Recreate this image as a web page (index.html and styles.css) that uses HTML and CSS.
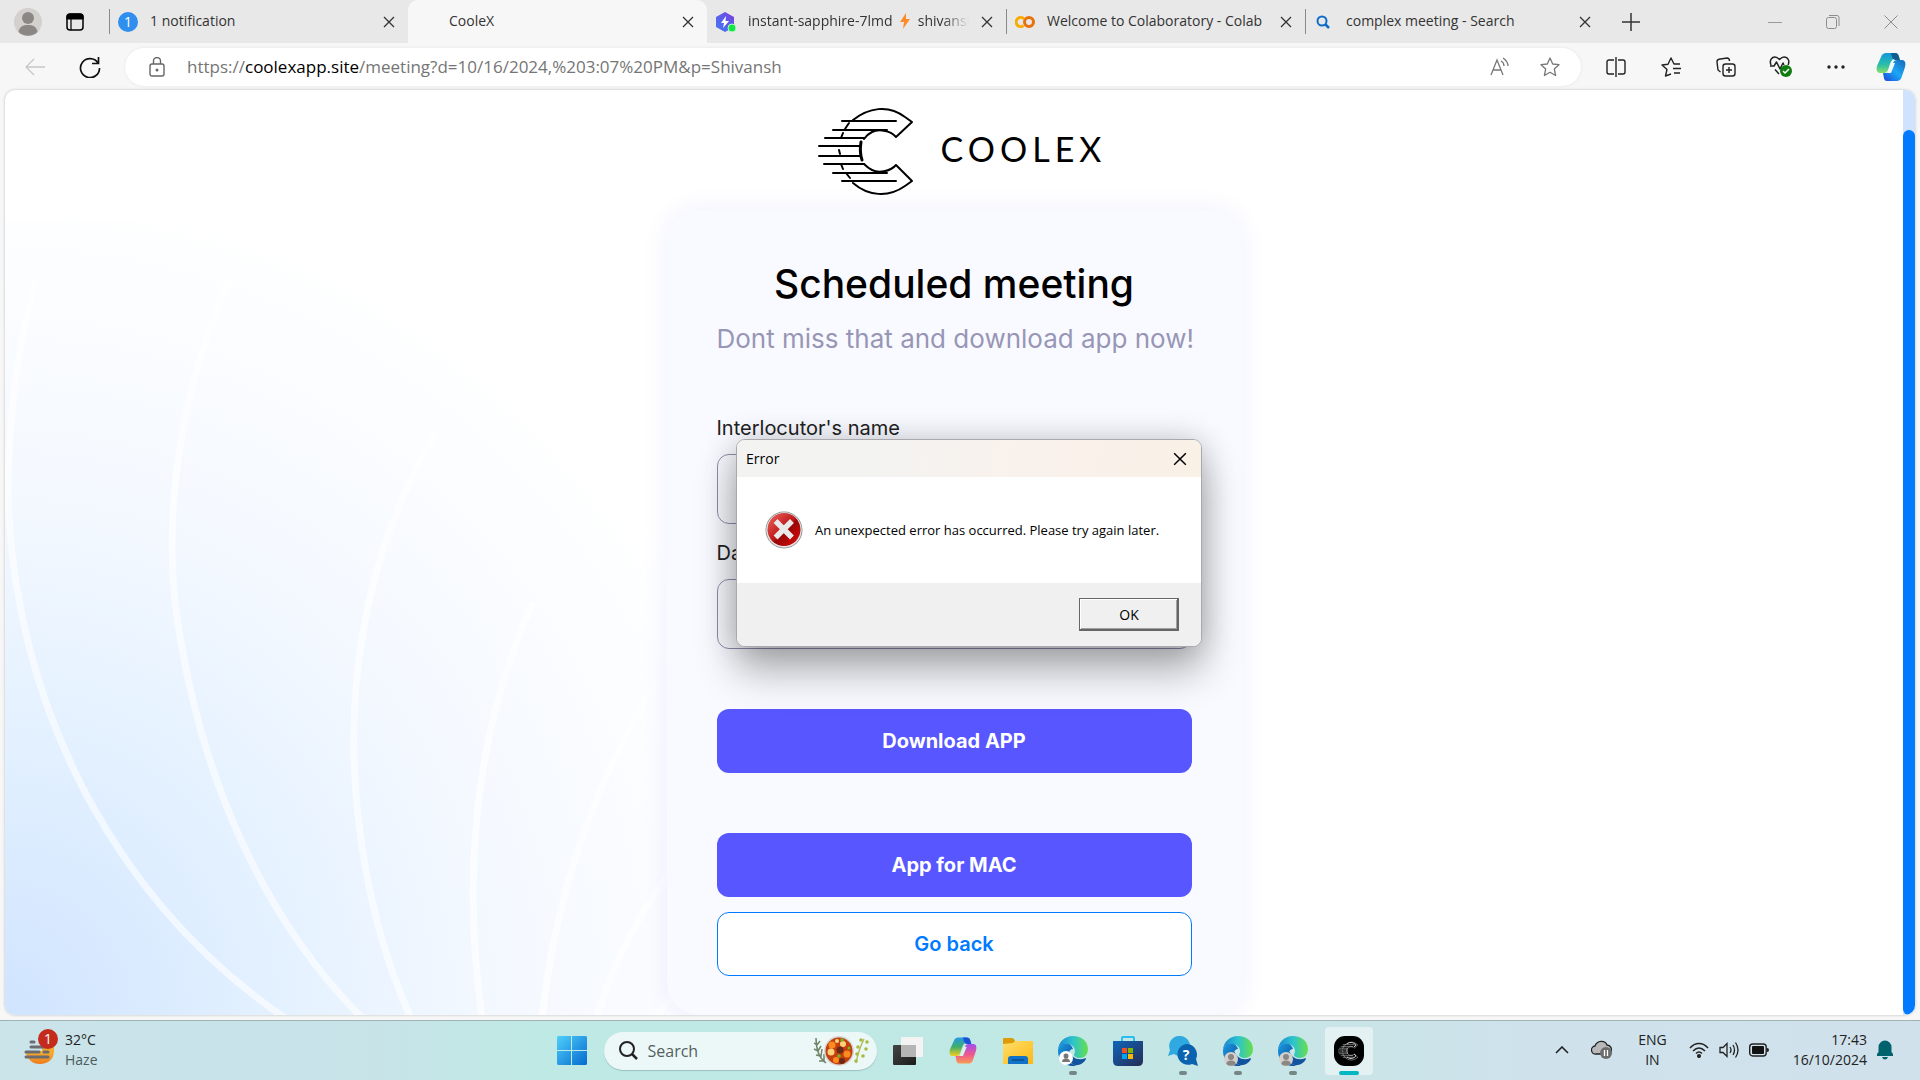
FILE: index.html
```html
<!DOCTYPE html>
<html lang="en">
<head>
<meta charset="utf-8">
<title>CooleX</title>
<link rel="stylesheet" href="styles.css">
</head>
<body>
<svg class="defs" aria-hidden="true">
  <defs>
    <linearGradient id="win" x1="0" y1="0" x2="1" y2="1"><stop offset="0" stop-color="#4fd0fb"/><stop offset="1" stop-color="#0569ce"/></linearGradient>
    <linearGradient id="edgeTop" x1="0" y1="0" x2="1" y2="0"><stop offset="0" stop-color="#1a86d2"/><stop offset=".5" stop-color="#2cc3cf"/><stop offset="1" stop-color="#67e04b"/></linearGradient>
    <linearGradient id="edgeLow" x1="0" y1="0" x2="1" y2="1"><stop offset="0" stop-color="#1b9de2"/><stop offset="1" stop-color="#0b3f93"/></linearGradient>
    <linearGradient id="folder" x1="0" y1="0" x2="1" y2="1"><stop offset="0" stop-color="#ffdf6b"/><stop offset="1" stop-color="#fdb813"/></linearGradient>
    <linearGradient id="store" x1="0" y1="0" x2="1" y2="1"><stop offset="0" stop-color="#0d66ba"/><stop offset="1" stop-color="#272c55"/></linearGradient>
    <linearGradient id="cpA" x1="0" y1="0" x2="0" y2="1"><stop offset="0" stop-color="#1497e0"/><stop offset=".6" stop-color="#2cbfa5"/><stop offset="1" stop-color="#8be06a"/></linearGradient>
    <linearGradient id="cpB" x1="1" y1="0" x2="0" y2="1"><stop offset="0" stop-color="#1668b8"/><stop offset=".5" stop-color="#1ca7f5"/><stop offset="1" stop-color="#1846d8"/></linearGradient>
    <linearGradient id="cpC" x1="0" y1="0" x2="0" y2="1"><stop offset="0" stop-color="#2499e8"/><stop offset=".5" stop-color="#3cae6c"/><stop offset="1" stop-color="#f5cf1d"/></linearGradient>
    <linearGradient id="cpD" x1="0" y1="0" x2="0" y2="1"><stop offset="0" stop-color="#a04df0"/><stop offset=".55" stop-color="#ee5a8d"/><stop offset="1" stop-color="#fb9b52"/></linearGradient>
    <linearGradient id="hex" x1="1" y1="0" x2="0" y2="1"><stop offset="0" stop-color="#7a3fe0"/><stop offset="1" stop-color="#3f7cf5"/></linearGradient>
    <linearGradient id="err" x1="0" y1="0" x2="1" y2="1"><stop offset="0" stop-color="#ee6a62"/><stop offset=".5" stop-color="#bf1618"/><stop offset=".55" stop-color="#990506"/><stop offset="1" stop-color="#e00d0d"/></linearGradient>
    <linearGradient id="sun" x1="0" y1="0" x2="0" y2="1"><stop offset="0" stop-color="#f7b431"/><stop offset="1" stop-color="#ef7b1c"/></linearGradient>
    <linearGradient id="tv" x1="0" y1="0" x2="1" y2="1"><stop offset="0" stop-color="#444"/><stop offset="1" stop-color="#1c1c1c"/></linearGradient>
  </defs>
  <symbol id="x" viewBox="0 0 12 12"><path d="M1 1l10 10M11 1L1 11" fill="none" stroke="currentColor" stroke-width="1.3"/></symbol>
  <symbol id="person" viewBox="0 0 28 28"><circle cx="14" cy="14" r="14" fill="#d3d1ce"/><circle cx="14" cy="10" r="6" fill="#8b8784"/><path d="M4.500 24c1-6 5-7 9.500-7s8.500 1 9.500 7a14 14 0 0 1-19 0z" fill="#8b8784"/></symbol>
  <symbol id="edge" viewBox="0 0 30 30">
    <path d="M15 0C6 0 .5 6.500 0 14c1-5 6-7 10-6 5 1 7 4 7 7 0 2-1 3-1 4s2 3 6 3c5 0 8-4 8-9C30 5 23 0 15 0z" fill="url(#edgeTop)"/>
    <path d="M0 14C-.5 23 6 30 15 30c1 0 2 0 3-.3C11 28 9 22 10 18c.6-3 3-5 5-5-1-4-4-6-8-5.500C3 8 .5 11 0 14z" fill="url(#edgeLow)"/>
    <path d="M11 15c-2 4-1 10 5 14 5 1 10-2 12-6 .3-1-.5-1-1-.7-4 1.700-9 1-12-1.600-2-1.700-3-3.700-4-5.700z" fill="#12539f"/>
  </symbol>
  <symbol id="cmark" viewBox="0 0 95 88">
    <g fill="none" stroke="currentColor" stroke-linecap="round" stroke-linejoin="round">
      <path stroke-width="2" d="M35 13C50 1 70-3 87 10l7 5-16 15C72 23 60 22 54 25c-4 2-6 4-8 7"/>
      <path stroke-width="2" d="M35 76C50 89 70 91 87 79l7-5-16-16C72 65 60 66 54 63c-4-2-6-4-8-6"/>
      <path stroke-width="3" d="M43 35c-1 6-1 12 1 18"/>
      <path stroke-width="2" d="M31 16l-4 6M25 26l-2 5M21 43l1 4M23 57l2 5M28 66l4 5"/>
      <path stroke-width="2" d="M24 14h54M15 23h54M7 31h39M1 39h41M1 49h41M6 57h40M15 66h54M24 74h54"/>
    </g>
  </symbol>
</svg>

<header class="browser">
  <div class="tabstrip">
    <button class="plain profile" aria-label="Profile"><svg width="28" height="28"><use href="#person"/></svg></button>
    <button class="plain tabmenu" aria-label="Tab actions"><svg width="18" height="18" viewBox="0 0 18 18"><rect x="1" y="1" width="16" height="16" rx="3" fill="none" stroke="#000" stroke-width="1.500"/><path d="M1 6V4a3 3 0 0 1 3-3h10a3 3 0 0 1 3 3v2zM5 6v11" stroke="#000" stroke-width="1.200"/></svg></button>
    <nav class="tabs">
      <div class="tab line"><span class="badge">1</span><span class="label">1 notification</span><button class="plain close" aria-label="Close tab"><svg width="12" height="12"><use href="#x"/></svg></button></div>
      <div class="tab active"><span class="blank"></span><span class="label">CooleX</span><button class="plain close" aria-label="Close tab"><svg width="12" height="12"><use href="#x"/></svg></button></div>
      <div class="tab after"><svg width="20" height="20" viewBox="0 0 20 20"><path d="M9 0l9 5v10l-9 5-9-5V5z" fill="url(#hex)"/><path d="M10 4l-5 7h3l-1 5 6-7H9.500z" fill="#fff"/><circle cx="16" cy="16" r="4" fill="#12e646" stroke="#b8f5c5" stroke-width="1"/></svg><span class="label fade">instant-sapphire-7lmd <svg class="bolt" width="12" height="16" viewBox="0 0 12 16"><path d="M7 0L1 9h4l-1 7 7-10H7z" fill="#ff8a2b"/></svg> shivansh</span><button class="plain close" aria-label="Close tab"><svg width="12" height="12"><use href="#x"/></svg></button></div>
      <div class="tab line"><svg width="20" height="20" viewBox="0 0 20 20"><g fill="none" stroke-width="3"><circle cx="14" cy="10" r="4.500" stroke="#e8710a"/><path d="M8.500 13.500A4.500 4.500 0 1 1 9 7" stroke="#f9ab00"/></g></svg><span class="label">Welcome to Colaboratory - Colab</span><button class="plain close" aria-label="Close tab"><svg width="12" height="12"><use href="#x"/></svg></button></div>
      <div class="tab line"><svg width="20" height="20" viewBox="0 0 20 20"><circle cx="8" cy="9" r="4.500" fill="none" stroke="#0f6cc9" stroke-width="2"/><path d="M11 12l4 4" stroke="#0f6cc9" stroke-width="2.500"/></svg><span class="label">complex meeting - Search</span><button class="plain close" aria-label="Close tab"><svg width="12" height="12"><use href="#x"/></svg></button></div>
      <button class="plain newtab" aria-label="New tab"><svg width="18" height="18" viewBox="0 0 18 18"><path d="M9 0v18M0 9h18" stroke="#333" stroke-width="1.500"/></svg></button>
    </nav>
    <div class="winbtns">
      <button class="plain" aria-label="Minimize"><svg width="14" height="14" viewBox="0 0 14 14"><path d="M0 7.500h14" stroke="#999"/></svg></button>
      <button class="plain" aria-label="Restore"><svg width="14" height="14" viewBox="0 0 14 14" fill="none" stroke="#8d8d8d"><rect x=".5" y="2.500" width="10" height="11" rx="2"/><path d="M3 .5h8a2 2 0 0 1 2 2V11"/></svg></button>
      <button class="plain" aria-label="Close"><svg width="14" height="14" viewBox="0 0 14 14"><path d="M.5.5l13 13M13.500.5l-13 13" stroke="#8d8d8d"/></svg></button>
    </div>
  </div>
  <div class="toolbar">
    <button class="plain" aria-label="Back"><svg width="20" height="20" viewBox="0 0 20 20" fill="none" stroke="#c8c8c8" stroke-width="1.300"><path d="M20 10H1M9 2l-8 8 8 8"/></svg></button>
    <button class="plain" aria-label="Refresh"><svg width="22" height="22" viewBox="0 0 22 22" fill="none" stroke="#111" stroke-width="1.700"><path d="M19 7A9.500 9.500 0 1 0 20.500 12M19.500 1v6.500H13"/></svg></button>
    <div class="address">
      <svg width="16" height="20" viewBox="0 0 16 20" fill="none" stroke="#666" stroke-width="1.400"><rect x="1" y="7" width="14" height="12" rx="2"/><path d="M4.500 7V4a3.500 3.500 0 0 1 7 0v3"/><circle cx="8" cy="13" r=".8" fill="#666"/></svg>
      <span class="url">https://<b>coolexapp.site</b>/meeting?d=10/16/2024,%203:07%20PM&amp;p=Shivansh</span>
      <button class="plain" aria-label="Read aloud"><svg width="20" height="20" viewBox="0 0 20 20" fill="none" stroke="#777" stroke-width="1.300"><path d="M1 18L7 3l6 15M3 13h8M11 4c2 1 3 3 3 5M13 1c3 2 5 5 5 8"/></svg></button>
      <button class="plain" aria-label="Favorite"><svg width="20" height="20" viewBox="0 0 20 20" fill="none" stroke="#777" stroke-width="1.300" stroke-linejoin="round"><path d="M10 1l2.700 6 6.300.7-4.700 4.300 1.300 6.500L10 15.300 4.400 18.500 5.700 12 1 7.700 7.300 7z"/></svg></button>
    </div>
    <div class="tools">
      <button class="plain" aria-label="Split screen"><svg width="20" height="20" viewBox="0 0 20 20" fill="none" stroke="#222" stroke-width="1.400"><path d="M8 3H3a2 2 0 0 0-2 2v10a2 2 0 0 0 2 2h5M12 3h5a2 2 0 0 1 2 2v10a2 2 0 0 1-2 2h-5M10 0v20"/></svg></button>
      <button class="plain" aria-label="Favorites"><svg width="20" height="20" viewBox="0 0 20 20" fill="none" stroke="#222" stroke-width="1.400" stroke-linejoin="round"><path d="M10 17l-5.500 2L6 12.500 1 8l6-.7L10 1l3 6h6M12 11.500h8M13 16h6"/></svg></button>
      <button class="plain" aria-label="Collections"><svg width="20" height="20" viewBox="0 0 20 20" fill="none" stroke="#222" stroke-width="1.400"><rect x="7" y="7" width="12" height="12" rx="2.500"/><path d="M13 10v6M10 13h6M4.500 15L2 13 1 5c0-2 1-2.500 2-2.700L11 1c1.500 0 2.500 1 2.500 3"/></svg></button>
      <button class="plain" aria-label="Browser essentials"><svg width="24" height="22" viewBox="0 0 24 22" fill="none" stroke="#222" stroke-width="1.500" stroke-linejoin="round"><path d="M10 18L6 13.500M2 9C0 4 3 1 6 1c2 0 3 1 4.500 2.500C12 2 13 1 15 1c4 0 6 4 4 8M1 10h4l2.500-4 3.500 7 3-6 1 2"/><circle cx="17" cy="15" r="6" fill="#107c10" stroke="none"/><path d="M14 15l2 2 4-4" stroke="#fff"/></svg></button>
      <button class="plain" aria-label="More"><svg width="20" height="20" viewBox="0 0 20 20" fill="#222"><circle cx="3" cy="10" r="1.700"/><circle cx="10" cy="10" r="1.700"/><circle cx="17" cy="10" r="1.700"/></svg></button>
      <button class="plain" aria-label="Copilot"><svg width="30" height="28" viewBox="0 0 30 28"><path d="M10 0h9c3 0 4 2 4 5l-4 1c-3 0-4 2-5 5l-2 6c-1 2-2 3-4 3H4c-3 0-4-3-3-7L5 4c1-3 3-4 5-4z" fill="url(#cpA)"/><path d="M15 0h4c3 0 4 3 5 7h-4c-3 0-4-2-5-7z" fill="#135d92"/><path d="M20 28h-9c-3 0-3-3-4-8h3c2 0 4-2 5-5l2-5c1-2 2-3 4-3h5c3 0 4 3 3 7l-3 9c-1 4-3 5-6 5z" fill="url(#cpB)"/><path d="M15 10h4l-4 10h-4c1-1 1-2 2-4z" fill="#f7f7f7"/></svg></button>
    </div>
  </div>
</header>

<main class="viewport">
  <div class="page">
    <svg class="waves" width="720" height="795" viewBox="5 220 720 795" fill="none" stroke="#fff" stroke-opacity=".6" stroke-width="7" aria-hidden="true">
      <path d="M36 280C18 340 5 440 9 518C22 720 120 905 285 1018"/>
      <path d="M230 279C180 390 165 510 175 602C195 760 255 910 362 1018"/>
      <path d="M436 433C360 560 345 700 358 815C365 880 380 950 411 1018"/>
      <path d="M533 602C480 720 460 860 482 1018"/>
      <path d="M655 685C590 790 555 900 542 1018"/>
      <path d="M680 860C640 910 612 965 597 1018"/>
      <path d="M690 970L656 1018"/>
    </svg>
    <div class="logo"><svg width="95" height="88"><use href="#cmark"/></svg><span>COOLEX</span></div>
    <form class="card">
      <h1>Scheduled meeting</h1>
      <p>Dont miss that and download app now!</p>
      <div class="fields">
        <label for="who">Interlocutor's name</label>
        <input id="who" type="text">
        <label for="date">Date</label>
        <input id="date" type="text">
      </div>
      <button type="button" class="btn spaced">Download APP</button>
      <button type="button" class="btn">App for MAC</button>
      <button type="button" class="btn outline">Go back</button>
    </form>
  </div>
  <div class="scroll"><div class="thumb"></div></div>
</main>

<footer class="taskbar">
  <button class="plain weather">
    <svg width="34" height="36" viewBox="0 0 34 36"><path d="M2 22h28c0 8-6 13-14 13S4 30 2 25z" fill="url(#sun)"/><path d="M18 14h12v10H18z" fill="#f4aa2c"/><g stroke="#6b6b70" stroke-width="3" stroke-linecap="round"><path d="M7 13h3M7 18h16M2 23h13M20 23h4M2 28h22"/></g><circle cx="24" cy="10" r="10" fill="#c42b1c"/><text x="24" y="15" text-anchor="middle" font-family="Open Sans, sans-serif" font-size="14" fill="#fff">1</text></svg>
    <span>32°C<br><span class="dim">Haze</span></span>
  </button>
  <div class="apps">
    <button class="plain app" aria-label="Start"><svg width="30" height="30" viewBox="0 0 30 30"><path d="M1 0h13v14H0V1zM15 0h14l1 1v13H15zM0 15h14v14H1l-1-1zM15 15h15v13l-1 1H15z" fill="url(#win)"/></svg></button>
    <label class="search"><svg width="20" height="20" viewBox="0 0 20 20" fill="none" stroke="#222" stroke-width="2"><circle cx="9" cy="8" r="7"/><path d="M14 13l5 5" stroke-width="2.500"/></svg><input type="search" placeholder="Search" aria-label="Search">
      <svg width="56" height="32" viewBox="0 0 56 32"><g fill="none" stroke="#6f8468" stroke-width="1.500"><path d="M3 3c0 10 3 20 10 25M1 8l3 2 3-4M1 14l4 2 3-5M3 20l5 1 1-7M6 26l5 0 0-7"/></g><g fill="#a9b944"><path d="M43 28c2-10 5-18 8-24" fill="none" stroke="#a9b944" stroke-width="1.300"/><circle cx="48" cy="5" r="1.800"/><circle cx="54" cy="7" r="1.800"/><circle cx="45" cy="12" r="1.800"/><circle cx="53" cy="14" r="1.800"/><circle cx="44" cy="19" r="1.800"/><circle cx="50" cy="21" r="1.800"/><circle cx="43" cy="26" r="1.800"/></g><circle cx="26" cy="16" r="15" fill="#d8d6d4"/><circle cx="26" cy="16" r="13.500" fill="#c23f10"/><g fill="#ff8a1f"><circle cx="19" cy="10" r="3.500"/><circle cx="34" cy="19" r="3.500"/><circle cx="23" cy="25" r="3"/></g><g fill="#ffd27a"><circle cx="30" cy="9" r="3"/><circle cx="18" cy="17" r="3.500"/><circle cx="24" cy="6" r="2"/></g><g fill="#6a2a17"><circle cx="27" cy="15" r="3.500"/><circle cx="29" cy="26" r="3"/></g><g fill="#79b51c"><circle cx="29" cy="5" r="1.800"/><circle cx="26" cy="21" r="1.800"/><circle cx="36" cy="13" r="1.500"/></g></svg>
    </label>
    <button class="plain app" aria-label="Task view"><svg width="30" height="28" viewBox="0 0 30 28"><rect y="8" width="23" height="20" rx="1" fill="url(#tv)"/><rect x="8" width="22" height="20" rx="1" fill="#f3f3f3"/><path d="M8 8h15v12H8z" fill="#b5b5b5"/></svg></button>
    <button class="plain app" aria-label="Copilot"><svg width="28" height="27" viewBox="0 0 30 28"><path d="M10 0h9c3 0 4 2 4 5l-4 1c-3 0-4 2-5 5l-2 6c-1 2-2 3-4 3H4c-3 0-4-3-3-7L5 4c1-3 3-4 5-4z" fill="url(#cpC)"/><path d="M15 0h4c3 0 4 3 5 7h-4c-3 0-4-2-5-7z" fill="#1b50d8"/><path d="M20 28h-9c-3 0-3-3-4-8h3c2 0 4-2 5-5l2-5c1-2 2-3 4-3h5c3 0 4 3 3 7l-3 9c-1 4-3 5-6 5z" fill="url(#cpD)"/><path d="M15 10h4l-4 10h-4c1-1 1-2 2-4z" fill="#d9f2ef"/></svg></button>
    <button class="plain app" aria-label="File Explorer"><svg width="30" height="28" viewBox="0 0 30 28"><path d="M0 2q0-1 1-1h8q2 0 3 3h17v6H0z" fill="#dc9b07"/><path d="M0 7l10-1 2-2h17q1 0 1 1v22H0z" fill="url(#folder)"/><path d="M5 27v-5q0-3 3-3h14q3 0 3 3v5z" fill="#1272c8"/><path d="M9 23h12" stroke="#0a4f90" stroke-width="1.500"/></svg></button>
    <button class="plain app run" aria-label="Edge"><svg width="30" height="30" viewBox="0 0 30 30"><use href="#edge"/><circle cx="8" cy="22" r="7" fill="#fff"/><circle cx="8" cy="20" r="2.500" fill="#777"/><path d="M4 26c0-5 8-5 8 0z" fill="#777"/></svg></button>
    <button class="plain app" aria-label="Store"><svg width="30" height="30" viewBox="0 0 30 30"><path d="M9 6V2q0-1 1-1h10q1 0 1 1v4" fill="none" stroke="#2bbcf0" stroke-width="2"/><path d="M0 5h30v20q0 5-5 5H5q-5 0-5-5z" fill="url(#store)"/><path d="M9 12h5v5H9z" fill="#f25022"/><path d="M15 12h5v5h-5z" fill="#7fba00"/><path d="M9 18h5v5H9z" fill="#00a4ef"/><path d="M15 18h5v5h-5z" fill="#ffb900"/></svg></button>
    <button class="plain app run" aria-label="Get Help"><svg width="30" height="30" viewBox="0 0 30 30"><path d="M11 0a10 10 0 1 1-5 18L0 20l2-6A10 10 0 0 1 11 0z" fill="#2fa9e0"/><path d="M18 8a10.500 10.500 0 0 1 10 15l2 7-6-2A10.500 10.500 0 1 1 18 8z" fill="#0b63b0"/><text x="18" y="24" text-anchor="middle" font-family="Open Sans, sans-serif" font-weight="700" font-size="14" fill="#fff">?</text></svg></button>
    <button class="plain app run" aria-label="Edge"><svg width="30" height="30" viewBox="0 0 30 30"><use href="#edge"/><use href="#person" x="1" y="16" width="14" height="14"/></svg></button>
    <button class="plain app run" aria-label="Edge"><svg width="30" height="30" viewBox="0 0 30 30"><use href="#edge"/><use href="#person" x="1" y="16" width="14" height="14"/></svg></button>
    <button class="plain app run current" aria-label="CooleX"><svg width="30" height="30" viewBox="0 0 30 30" color="#fff"><rect width="30" height="30" rx="11" fill="#000"/><use href="#cmark" x="4" y="5" width="20" height="20"/><path d="M13 8c4-3 7-1 9 1l-2 2M13 21c4 3 7 1 9-1l-2-2" fill="none" stroke="#ccc"/></svg></button>
  </div>
  <div class="tray">
    <button class="plain" aria-label="Hidden icons"><svg width="14" height="8" viewBox="0 0 14 8"><path d="M1 7l6-6 6 6" fill="none" stroke="#222" stroke-width="1.600"/></svg></button>
    <svg class="cloud" width="22" height="20" viewBox="0 0 22 20"><path d="M5 14a4 4 0 0 1-1-8C6 0 14 0 16 5c4 0 5 4 4 7l-2 2z" fill="#b9b9b9" stroke="#222" stroke-width="1.300"/><circle cx="15" cy="13" r="6" fill="#6d6d6d"/><path d="M13.500 10v6M16.500 10v6" stroke="#fff" stroke-width="1.300"/></svg>
    <button class="plain lang">ENG<br>IN</button>
    <button class="plain status" aria-label="Network, volume, battery">
      <svg width="20" height="16" viewBox="0 0 20 16" fill="none" stroke="#222" stroke-width="1.500"><path d="M1 6c5-6 13-6 18 0M4 9c4-4 8-4 12 0M7 11.500c2-2 4-2 6 0"/><circle cx="10" cy="14" r="1.300" fill="#222"/></svg>
      <svg width="20" height="18" viewBox="0 0 20 18" fill="none" stroke="#222" stroke-width="1.300"><path d="M1 6.500h3l4-4v13l-4-4H1zM11 6q2 3 0 6M14 4q3 5 0 10M16.500 1.500q5 7.500 0 15"/></svg>
      <svg width="20" height="14" viewBox="0 0 20 14"><rect x=".7" y="1" width="16.500" height="12" rx="3" fill="none" stroke="#222" stroke-width="1.400"/><rect x="3" y="3" width="12" height="8" rx="1" fill="#111"/><path d="M18 5q2 0 2 2t-2 2z" fill="#222"/></svg>
    </button>
    <button class="plain clock">17:43<br>16/10/2024</button>
    <svg width="18" height="20" viewBox="0 0 18 20"><path d="M1 16v-2l1.500-2V7a6.500 6.500 0 0 1 13 0v5L17 14v2zM6 17h6q-1 2.500-3 2.500T6 17z" fill="#00626d"/></svg>
  </div>
</footer>

<section class="dialog" role="alertdialog" aria-labelledby="dt" aria-describedby="dm">
  <div class="dtitle"><span id="dt">Error</span><button class="plain" aria-label="Close"><svg width="14" height="14"><use href="#x"/></svg></button></div>
  <div class="dbody">
    <svg width="38" height="38" viewBox="0 0 38 38"><circle cx="19" cy="19" r="18.500" fill="#8c8c8c"/><circle cx="19" cy="19" r="17.700" fill="#e4e4e4"/><circle cx="19" cy="18.500" r="16.500" fill="url(#err)"/><path d="M12.500 12L25 24.500M25 12L12.500 24.500" stroke="#e9e9e9" stroke-width="5.500" stroke-linecap="square"/></svg>
    <span id="dm">An unexpected error has occurred. Please try again later.</span>
  </div>
  <div class="dfoot"><button class="ok">OK</button></div>
</section>
</body>
</html>
```
FILE: styles.css
```css
* { box-sizing: border-box; }
body {
  margin: 0;
  min-height: 100vh;
  display: flex;
  flex-direction: column;
  position: relative;
  background: #f7f7f7;
  font-family: "Open Sans", "Noto Sans", sans-serif;
  font-size: 14px;
  color: #222;
}
svg { display: block; flex: none; }
.defs { position: absolute; width: 0; height: 0; }
.plain {
  border: 0;
  padding: 0;
  background: none;
  font: inherit;
  color: inherit;
  display: flex;
  align-items: center;
  justify-content: center;
}

/* Browser chrome */
.tabstrip { display: flex; height: 43px; background: #e8e8e8; }
.profile { width: 56px; }
.tabmenu { width: 38px; margin-right: 15px; }
.tabs { flex: 1; display: flex; min-width: 0; }
.tab {
  flex: 0 1 299px;
  min-width: 0;
  display: flex;
  align-items: center;
  gap: 12px;
  padding: 0 13px 0 9px;
  color: #333;
  position: relative;
}
.tab.line::before {
  content: "";
  position: absolute;
  left: 0;
  top: 9px;
  width: 1px;
  height: 25px;
  background: #8a8a8a;
}
.tab.active { background: #f7f7f7; border-radius: 10px 10px 0 0; }
.label { flex: 1; padding-bottom: 2px; white-space: nowrap; overflow: hidden; line-height: 20px; }
.bolt { display: inline-block; vertical-align: -3px; margin: 0 3px; }
.fade { mask-image: linear-gradient(90deg, #000 88%, transparent); }
.badge {
  width: 20px;
  height: 20px;
  border-radius: 50%;
  background: #2f8eee;
  color: #fff;
  font-size: 14px;
  line-height: 20px;
  text-align: center;
}
.blank { width: 20px; }
.newtab { width: 54px; }
.winbtns { display: flex; }
.winbtns button { width: 58px; }

.toolbar { display: flex; align-items: center; height: 47px; padding: 0 2px 0 8px; }
.toolbar > button { width: 54px; }
.toolbar > button + button { width: 56px; margin-right: 7px; }
.address {
  flex: 1;
  display: flex;
  align-items: center;
  gap: 30px;
  height: 38px;
  padding: 0 21px 0 24px;
  border-radius: 19px;
  background: #fff;
  box-shadow: 0 0 3px #e2e2e2;
}
.url { flex: 1; margin-left: -8px; color: #757575; font-size: 17px; white-space: nowrap; }
.url b { font-weight: 400; color: #000; }
.tools { display: flex; margin-left: 7px; }
.tools button { width: 55px; }

/* Web page */
.viewport {
  flex: 1;
  display: flex;
  margin: 0 5px;
  border-radius: 10px;
  overflow: hidden;
  background: #fff;
  box-shadow: 0 0 3px #bbb;
}
.page {
  flex: 1;
  position: relative;
  display: flex;
  flex-direction: column;
  align-items: center;
  font-family: Inter, sans-serif;
}
.waves {
  position: absolute;
  left: 0;
  bottom: 0;
  background: radial-gradient(ellipse 110% 105% at 0 100%, #d0e4ff 0, #e2f0ff 32%, #f3f8ff 60%, #fff 100%);
}
.logo {
  display: flex;
  align-items: center;
  gap: 28px;
  margin: 17px 0 15px 16px;
  color: #000;
}
.logo span { padding-bottom: 4px; font: 34px/40px Lato, sans-serif; letter-spacing: 5px; }
.card {
  position: relative;
  display: flex;
  flex-direction: column;
  flex: 1;
  width: 575px;
  padding: 50px 50px 39px;
  border-radius: 32px;
  background: #f9faff;
  box-shadow: 0 0 24px rgba(87, 86, 255, .1);
}
h1 { margin: 0; font-size: 39px; line-height: 48px; font-weight: 500; color: #000; text-align: center; }
.card p { margin: 15px 0 58px; font-size: 26px; line-height: 32px; color: #9896b6; text-align: center; white-space: nowrap; }
.fields { display: flex; flex-direction: column; margin-bottom: 60px; }
.fields label { margin: 3px 0 14px; font-size: 20px; line-height: 24px; color: #222; }
.fields input {
  height: 70px;
  margin-bottom: 14px;
  padding: 0 20px;
  border: 1px solid #8f8dae;
  border-radius: 12px;
  background: transparent;
  font: inherit;
}
.fields input:last-child { margin: 0; }
.btn {
  height: 64px;
  border: 0;
  border-radius: 12px;
  background: #5756ff;
  color: #fff;
  font: 700 20px/24px Inter, sans-serif;
}
.spaced { margin-bottom: 60px; }
.outline { margin-top: 15px; border: 1px solid #007bff; background: #fff; color: #007bff; font-weight: 600; }
.scroll { width: 12px; padding-top: 40px; background: #cfe3ff; display: flex; }
.thumb { flex: 1; border-radius: 6px; background: #007bff; }

/* Error dialog */
.dialog {
  position: absolute;
  left: 736px;
  top: 439px;
  width: 466px;
  border: 1px solid #a9a9ad;
  border-radius: 9px;
  overflow: hidden;
  background: #fff;
  color: #000;
  box-shadow: 0 24px 40px rgba(0, 0, 0, .3), 0 0 32px rgba(0, 0, 0, .18);
}
.dtitle {
  display: flex;
  justify-content: space-between;
  align-items: center;
  height: 37px;
  padding: 0 14px 0 9px;
  background: linear-gradient(100deg, #f3f3f1 30%, #f9f1ec 60%, #f9f1e6);
}
.dbody { display: flex; align-items: center; gap: 12px; height: 106px; padding: 0 28px; font-size: 13px; }
.dfoot { display: flex; justify-content: flex-end; padding: 15px 22px; background: #f0f0f0; }
.ok {
  width: 100px;
  height: 33px;
  border: 1px solid #666;
  border-radius: 0;
  background: #f0f0f0;
  box-shadow: inset -1px -1px #666, inset 1px 1px #fff, inset -2px -2px #a0a0a0;
  font: inherit;
  color: #000;
}

/* Taskbar */
.taskbar {
  display: grid;
  grid-template-columns: 1fr auto 1fr;
  align-items: center;
  height: 60px;
  margin-top: 5px;
  border-top: 1px solid #9fb3b5;
  background: linear-gradient(90deg, #cae4ea 0, #c7e3e8 20%, #bee9e4 28%, #c0e8e4 52%, #cae4e8 72%, #cfe2ec 80%, #d0e1ec 100%);
}
.weather { justify-self: start; gap: 7px; padding: 0 0 2px 24px; line-height: 20px; text-align: left; }
.weather svg { margin-bottom: 6px; }
.dim { color: #4c5c5e; }
.apps { display: flex; align-items: center; padding-right: 3px; }
.app { position: relative; width: 55px; height: 48px; }
.search {
  display: flex;
  align-items: center;
  width: 273px;
  height: 38px;
  margin: 0 4px;
  padding: 0 8px 0 14px;
  border-radius: 19px;
  background: #ecf8f7;
  box-shadow: 0 1px 1px #9cc0bf;
}
.search input { flex: 1; min-width: 0; margin-left: 8px; border: 0; background: none; font: inherit; font-size: 16px; }
.search input::placeholder { color: #555f5f; }
.run::after {
  content: "";
  position: absolute;
  left: calc(50% - 4px);
  bottom: 0;
  width: 8px;
  height: 4px;
  border-radius: 2px;
  background: #748786;
}
.current { width: 48px; margin-left: 4px; border-radius: 4px; background: #e4f1f3; }
.current::after { left: calc(50% - 10px); width: 20px; background: #00b7c3; }
.tray { display: flex; align-items: center; justify-self: end; padding: 0 26px 2px 0; line-height: 20px; }
.cloud { margin: 0 25px 0 22px; }
.lang { text-align: center; }
.status { gap: 10px; margin: 0 24px 0 22px; }
.clock { text-align: right; margin-right: 9px; }
```
